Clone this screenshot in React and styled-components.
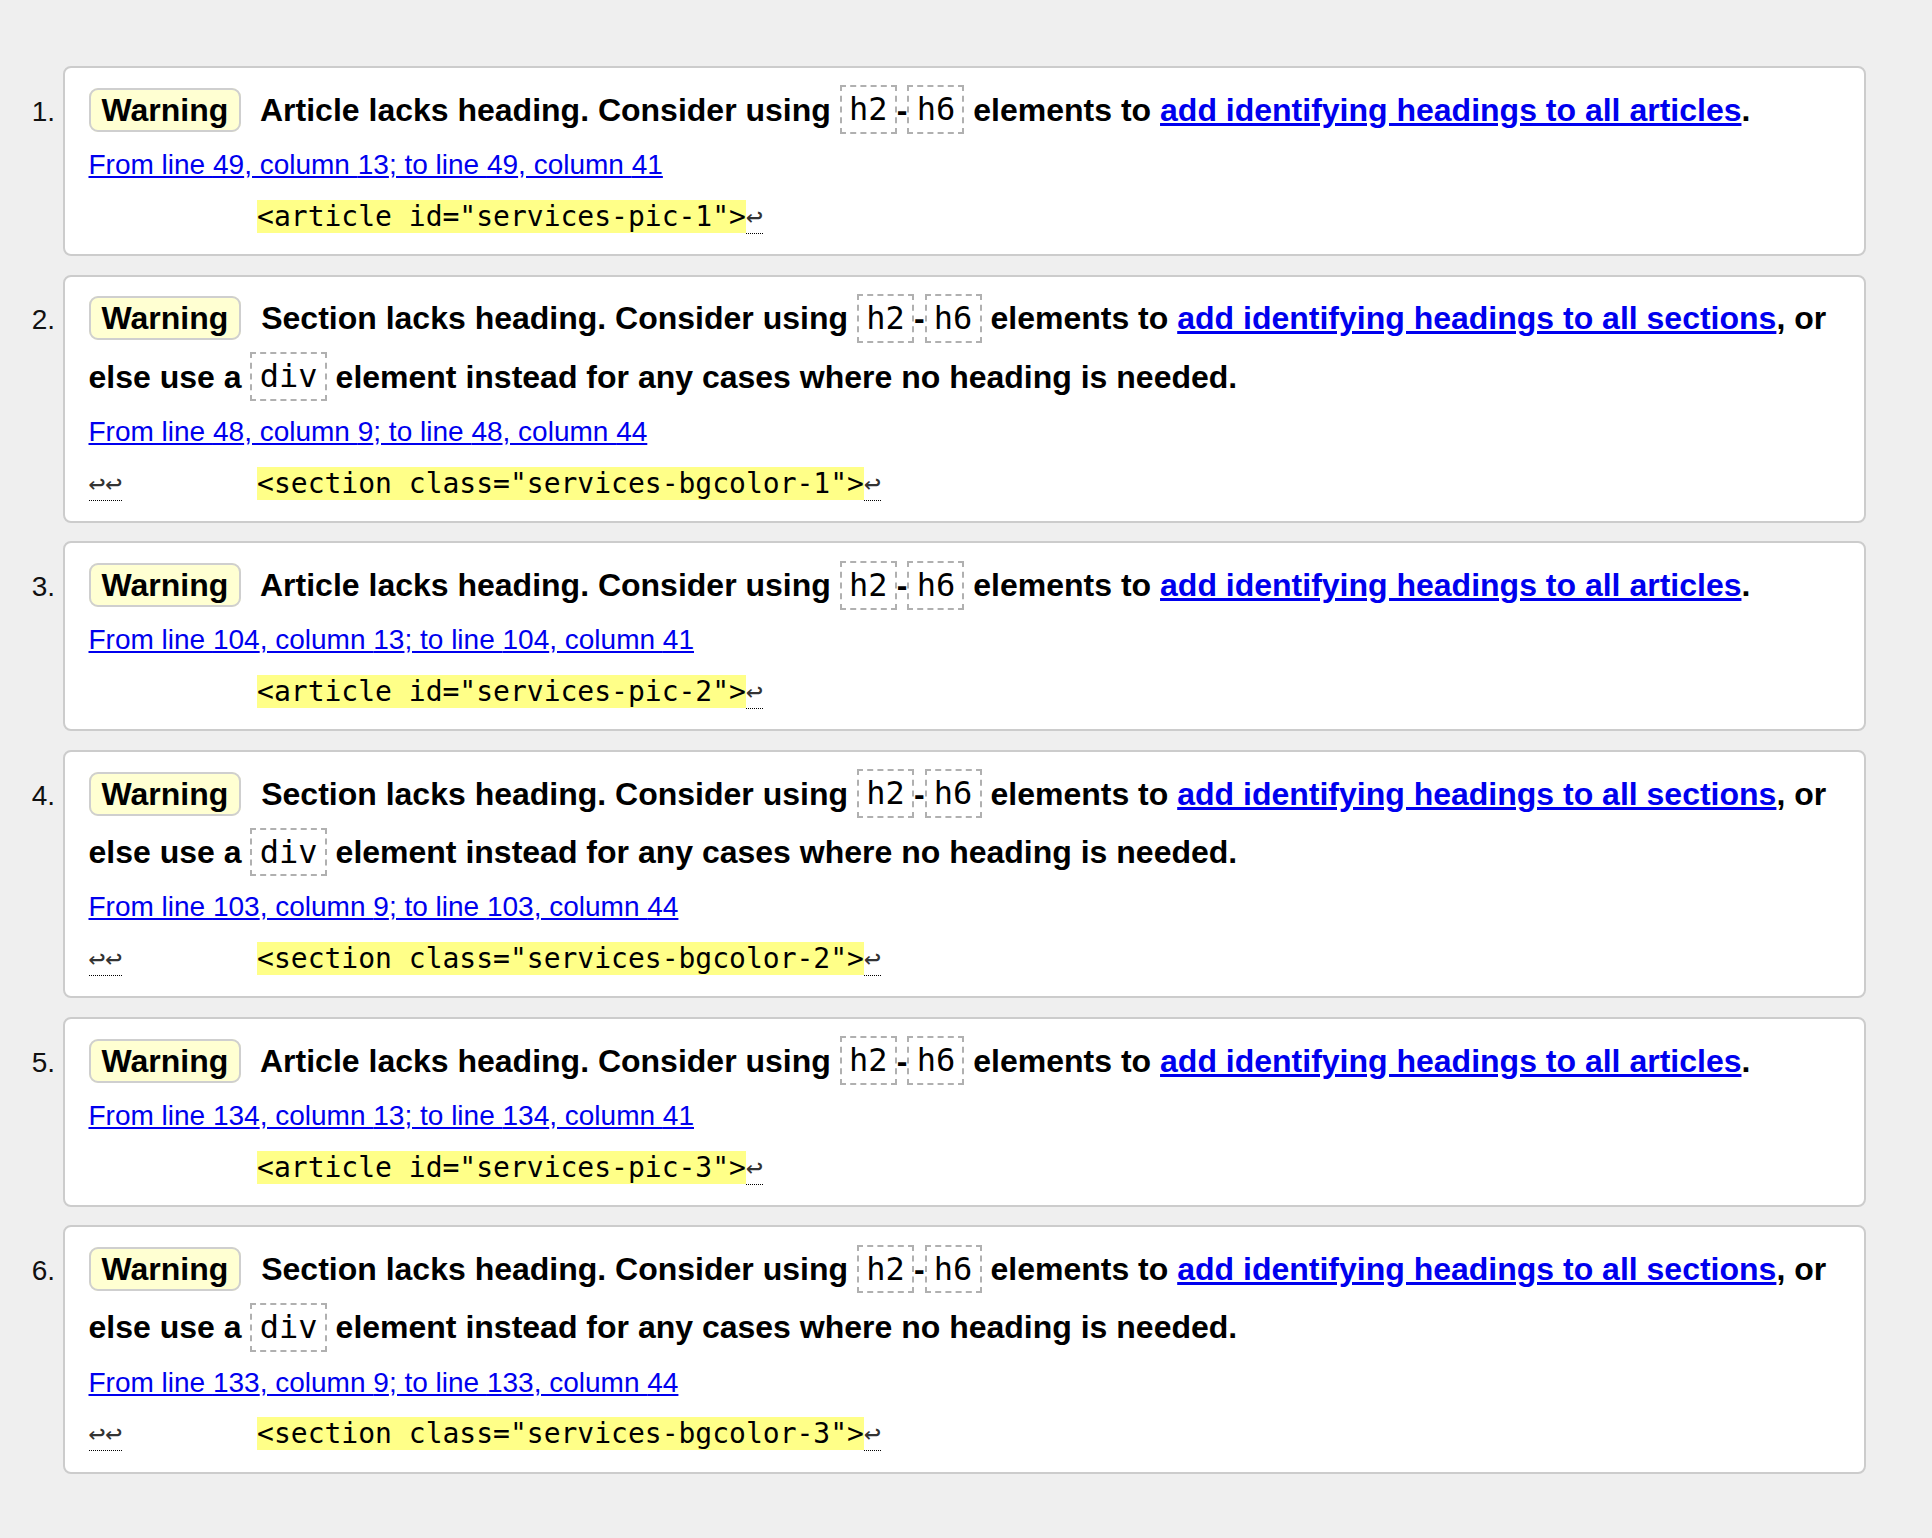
import React from "react";
import styled, { createGlobalStyle } from "styled-components";

const GlobalStyle = createGlobalStyle`
  html, body {
    margin: 0;
    padding: 0;
    background: #efefef;
  }
  body {
    font-family: "Liberation Sans", Arial, Helvetica, sans-serif;
    color: #000;
  }
`;

const Page = styled.div`
  display: flex;
  flex-direction: column;
  gap: 18.5px;
  padding: 66px 66px 66px 0;
`;

const Row = styled.div`
  display: flex;
  align-items: baseline;
`;

const Number = styled.span`
  flex: 0 0 55px;
  margin-right: 8px;
  text-align: right;
  font-size: 28px;
  color: #111;
`;

const Card = styled.div`
  flex: 1;
  min-width: 0;
  background: #fff;
  border: 2px solid #cccccc;
  border-radius: 8px;
  padding: 12.8px 24px 16.3px 23.5px;
`;

const Message = styled.p`
  margin: 0;
  font-size: 32px;
  font-weight: bold;
  line-height: 58.2px;
`;

const Badge = styled.strong`
  display: inline;
  font-weight: bold;
  background: #ffffd2;
  border: 2px solid #cfcfcf;
  border-radius: 9px;
  padding: 2px 11px;
  margin-right: 11px;
`;

const InlineCode = styled.code`
  font-family: "DejaVu Sans Mono", "Liberation Mono", monospace;
  font-weight: normal;
  font-size: 1em;
  padding: 3.4px 7.25px;
  border: 2px dashed #b0b0b0;
  white-space: nowrap;
`;

const MessageLink = styled.a`
  color: #0000ee;
  text-decoration: underline;
`;

const Location = styled.p`
  margin: 5.1px 0 0;
  font-size: 28px;
  line-height: 42px;
`;

const LocationLink = styled.a`
  color: #0000ee;
  text-decoration: underline;
`;

const Extract = styled.p`
  margin: 9.7px 0 0;
  font-family: "DejaVu Sans Mono", "Liberation Mono", monospace;
  font-size: 28px;
  line-height: 42px;
  white-space: pre;
`;

const Highlight = styled.b`
  font-weight: normal;
  background: #ffff88;
`;

const LineMark = styled.span`
  color: #333;
  border-bottom: 1px dotted #000;
`;

const items = [
  { kind: "article", from: [49, 13], to: [49, 41], tag: '<article id="services-pic-1">' },
  { kind: "section", from: [48, 9], to: [48, 44], tag: '<section class="services-bgcolor-1">' },
  { kind: "article", from: [104, 13], to: [104, 41], tag: '<article id="services-pic-2">' },
  { kind: "section", from: [103, 9], to: [103, 44], tag: '<section class="services-bgcolor-2">' },
  { kind: "article", from: [134, 13], to: [134, 41], tag: '<article id="services-pic-3">' },
  { kind: "section", from: [133, 9], to: [133, 44], tag: '<section class="services-bgcolor-3">' },
];

function MessageText({ kind }) {
  if (kind === "article") {
    return (
      <>
        Article lacks heading. Consider using <InlineCode>h2</InlineCode>-<InlineCode>h6</InlineCode>{" "}
        elements to <MessageLink href="#">add identifying headings to all articles</MessageLink>.
      </>
    );
  }
  return (
    <>
      Section lacks heading. Consider using <InlineCode>h2</InlineCode>-<InlineCode>h6</InlineCode>{" "}
      elements to <MessageLink href="#">add identifying headings to all sections</MessageLink>, or
      else use a <InlineCode>div</InlineCode> element instead for any cases where no heading is
      needed.
    </>
  );
}

export default function App() {
  return (
    <>
      <GlobalStyle />
      <Page>
        {items.map((it, i) => (
          <Row key={i}>
            <Number>{i + 1}.</Number>
            <Card>
              <Message>
                <Badge>Warning</Badge> <MessageText kind={it.kind} />
              </Message>
              <Location>
                <LocationLink href="#">
                  From line {it.from[0]}, column {it.from[1]}; to line {it.to[0]}, column {it.to[1]}
                </LocationLink>
              </Location>
              <Extract>
                {it.kind === "section" ? (
                  <>
                    <LineMark>↩↩</LineMark>
                    {"        "}
                  </>
                ) : (
                  "          "
                )}
                <Highlight>{it.tag}</Highlight>
                <LineMark>↩</LineMark>
              </Extract>
            </Card>
          </Row>
        ))}
      </Page>
    </>
  );
}
